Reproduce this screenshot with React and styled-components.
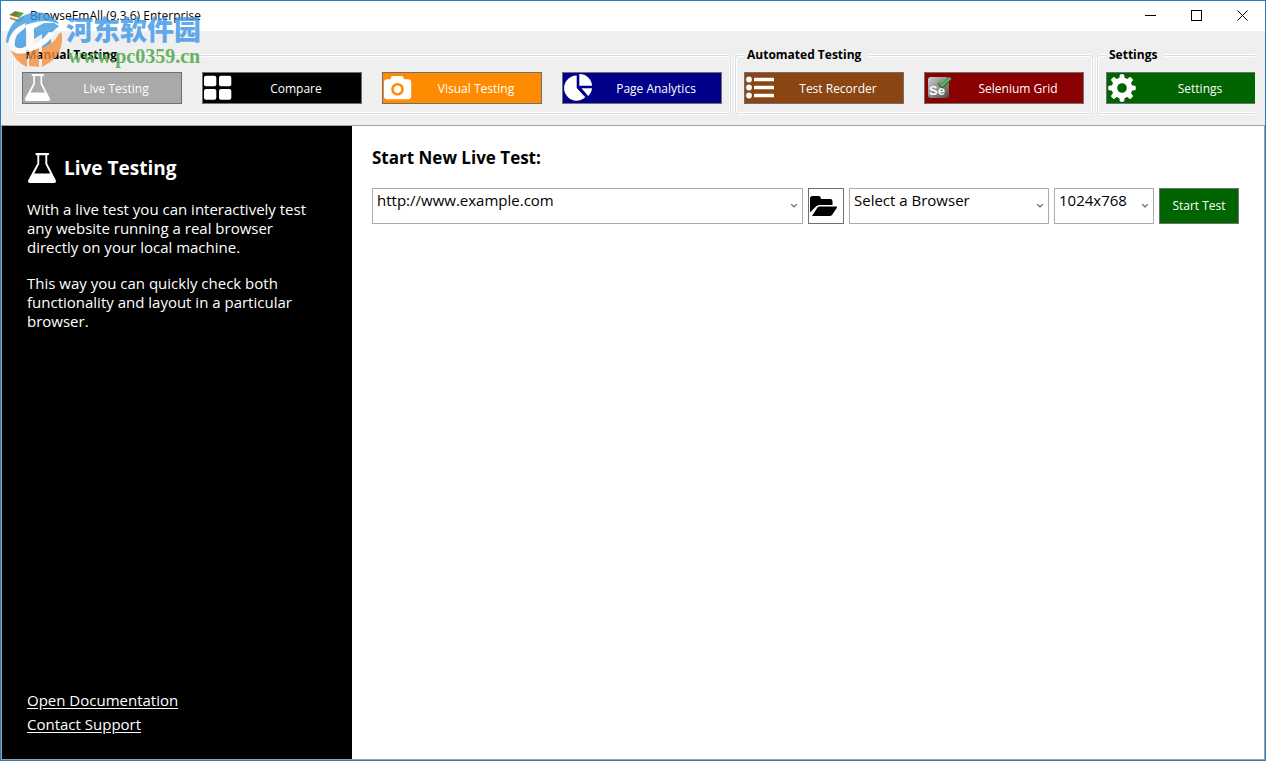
import React from "react"
import styled, { createGlobalStyle } from "styled-components"

const GlobalStyle = createGlobalStyle`
  *, *::before, *::after {
    box-sizing: border-box;
  }

  body {
    margin: 0;
    font-family: "Open Sans", "Noto Sans", sans-serif;
    font-size: 12px;
    color: #000;
  }

  button, input, select {
    font-family: inherit;
    font-size: inherit;
    color: inherit;
  }
`

const Window = styled.div`
  position: relative;
  display: flex;
  flex-direction: column;
  min-height: 100vh;
  border: 1px solid #2a7cc3;
  background: #efefef;
`

const TitleBar = styled.header`
  display: flex;
  align-items: center;
  height: 30px;
  padding-left: 8px;
  background: #fff;
`

const Title = styled.h1`
  flex: 1;
  margin: 0 0 0 5px;
  padding-bottom: 2px;
  font-size: 12px;
  font-weight: 400;
`

const WindowButton = styled.button`
  display: flex;
  align-items: center;
  justify-content: center;
  width: 46px;
  height: 30px;
  padding: 0 0 2px;
  border: 0;
  background: none;

  &:hover {
    background: #e5e5e5;
  }
`

const Ribbon = styled.nav`
  display: flex;
  gap: 2px;
  height: 94px;
  margin: 0 10px 0 11px;
  padding-top: 15px;
  overflow: hidden;
`

const Group = styled.fieldset`
  flex: none;
  display: flex;
  height: 69px;
  min-width: 0;
  margin: 0;
  padding: 8px 7px 6px;
  border: 3px double #fff;
  border-radius: 4px;
  background: linear-gradient(#efefef, #efefef) padding-box, #d5dfe5 border-box;

  legend {
    padding: 0 8px 0 3px;
    background: #efefef;
    font-weight: 700;
    line-height: 18px;
  }
`

const GroupButtons = styled.div`
  display: flex;
  gap: 20px;
`

const RibbonButton = styled.button`
  display: flex;
  align-items: center;
  width: 160px;
  height: 32px;
  padding: 0 2px 0 0;
  border: 1px solid #707070;
  background: ${(p) => p.$color};
  color: #fff;

  svg {
    flex: none;
  }

  span {
    flex: 1;
    text-align: center;
  }
`

const Content = styled.div`
  flex: 1;
  display: flex;
  border: 1px solid #a0a0a0;
  background: #fff;
`

const Sidebar = styled.aside`
  flex: none;
  display: flex;
  flex-direction: column;
  width: 350px;
  padding: 26px 25px 23px;
  background: #000;
  color: #fff;
  font-size: 15px;
  line-height: 19px;

  p {
    margin: 0 0 17px;
  }
`

const SidebarTitle = styled.h2`
  display: flex;
  align-items: center;
  gap: 7px;
  margin: 0 0 16px;
  font-size: 19px;
  line-height: 32px;
`

const SidebarLinks = styled.div`
  display: flex;
  flex-direction: column;
  align-items: flex-start;
  margin-top: auto;

  a {
    color: #fff;
    line-height: 24px;
    text-underline-offset: 2px;
  }
`

const Main = styled.main`
  flex: 1;
  min-width: 0;
  padding: 20px 25px 20px 20px;

  h2 {
    margin: 0 0 18px;
    font-size: 17px;
    line-height: 24px;
  }
`

const TestForm = styled.form`
  display: flex;
  gap: 5px;
`

const Combo = styled.div`
  position: relative;
  flex: ${(p) => (p.$width ? "none" : 1)};
  width: ${(p) => p.$width || "auto"};

  input,
  select {
    display: block;
    width: 100%;
    height: 36px;
    margin: 0;
    padding: 0 20px 12px 4px;
    border: 1px solid #acacac;
    border-radius: 0;
    outline: 0;
    appearance: none;
    background: #fff;
    font-size: 15px;
  }

  svg {
    position: absolute;
    top: 15px;
    right: 5px;
    pointer-events: none;
  }
`

const FolderButton = styled.button`
  display: flex;
  align-items: center;
  width: 36px;
  height: 36px;
  padding: 0;
  border: 1px solid #707070;
  background: #fff;
`

const StartButton = styled.button`
  width: 80px;
  height: 36px;
  padding: 0 0 2px;
  border: 1px solid #707070;
  background: #006400;
  color: #fff;
`

// Site mark, laid over the title bar and the ribbon
const Watermark = styled.div`
  position: absolute;
  top: 8px;
  left: 3px;
  display: flex;
  gap: 1px;
  pointer-events: none;
`

const WatermarkText = styled.div`
  padding-top: 5px;
  font-weight: 700;

  strong {
    display: block;
    color: #3c96e6;
    opacity: 0.8;
    font-family: "Noto Sans CJK SC", sans-serif;
    font-size: 27px;
    line-height: 30px;
  }

  span {
    display: block;
    padding-left: 2px;
    color: #4ca84a;
    opacity: 0.85;
    font-family: "Liberation Serif", serif;
    font-size: 20px;
    line-height: 24px;
  }
`

const FlaskIcon = ({ size = 30, viewBox = "0 0 30 30" }) => (
  <svg width={size} height={size} viewBox={viewBox} fill="#fff">
    <path
      fillRule="evenodd"
      d="M9.500 1h10.500q1 0 1 1t-1 1h-.8v7.500l7.600 14.800q1 2.700-1.600 2.700H3.800q-2.600 0-1.600-2.700L10.300 10.500V3h-.8q-1 0-1-1t1-1zM12 3v8l-4.500 8.500h14.400L17.500 11V3z"
    />
  </svg>
)

const TilesIcon = () => (
  <svg width="30" height="30" fill="#fff">
    <rect x="1" y="2.700" width="12.300" height="10.600" rx="2" />
    <rect x="16" y="2.700" width="12.300" height="10.600" rx="2" />
    <rect x="1" y="16" width="12.300" height="10.800" rx="2" />
    <rect x="16" y="16" width="12.300" height="10.800" rx="2" />
  </svg>
)

const CameraIcon = () => (
  <svg width="30" height="30" fill="#fff">
    <path d="M4 6.300h3.200l1.200-2.500q.4-.8 1.500-.8h8.600q1.100 0 1.500.8l1.200 2.500H25q3.200 0 3.200 3v14q0 3-3.200 3H4q-3 0-3-3v-14q0-3 3-3z" />
    <circle cx="14.500" cy="16.300" r="5" fill="none" stroke="#ff8c00" strokeWidth="2.600" />
  </svg>
)

const PieIcon = () => (
  <svg width="30" height="30" fill="#fff">
    <path d="M13.700 2.500V15l8.600 9.300A12.600 12.600 0 1 1 13.700 2.500z" />
    <path d="M16.300 1A12.500 12 0 0 1 29 12.800H16.300z" />
    <path d="M18.500 15.200H29q-.3 4.600-3.800 7.800z" />
  </svg>
)

const ListIcon = () => (
  <svg width="30" height="30" fill="#fff">
    {[6.5, 14.5, 22.5].map((y) => (
      <React.Fragment key={y}>
        <circle cx="4" cy={y} r="2.900" />
        <rect x="9" y={y - 1.8} width="20" height="3.600" rx="0.600" />
      </React.Fragment>
    ))}
  </svg>
)

const SeleniumIcon = () => (
  <svg width="30" height="30">
    <defs>
      <linearGradient id="se" x1="0" y1="0" x2="1" y2="1">
        <stop offset="0" stopColor="#d0d0d0" />
        <stop offset="0.5" stopColor="#8c8c8c" />
        <stop offset="1" stopColor="#4c4c4c" />
      </linearGradient>
    </defs>
    <rect x="3" y="4" width="21" height="21" rx="3" fill="url(#se)" />
    <text x="4" y="22" fill="#fff" fontSize="13" fontWeight="700" fontFamily="Liberation Sans, sans-serif">
      Se
    </text>
    <path d="M13.500 9.500l4 3.800L25.500 5" fill="none" stroke="#23702c" strokeWidth="3.600" />
    <path d="M13.800 9.200l3.700 3.400L25.300 4.800" fill="none" stroke="#5dbb63" strokeWidth="2" />
  </svg>
)

const GearIcon = () => (
  <svg width="30" height="30" viewBox="-15 -15 30 30" fill="none" stroke="#fff">
    <circle r="7.600" strokeWidth="5.600" />
    {[0, 45, 90, 135, 180, 225, 270, 315].map((angle) => (
      <path
        key={angle}
        d="M-2.200-9.500L-1.700-13.200H1.700L2.200-9.500z"
        fill="#fff"
        strokeWidth="1"
        strokeLinejoin="round"
        transform={`rotate(${angle})`}
      />
    ))}
  </svg>
)

const FolderIcon = () => (
  <svg width="30" height="30">
    <path d="M1 21.500V7.500Q1 5 3.500 5h6q2.300 0 2.300 2.300V8h9.400q2.300 0 2.300 2.300V14H10.500q-2.300 0-3.800 1.800z" />
    <path d="M3 25L8.300 16.800Q9.300 15.500 11 15.500h16q1.600 0 .7 1.400l-4.500 6.800q-.9 1.300-2.600 1.300z" />
  </svg>
)

const Chevron = () => (
  <svg width="8" height="6" fill="none" stroke="#606060" strokeWidth="1.200">
    <path d="M1.200 1.200L4 4l2.800-2.800" />
  </svg>
)

const AppIcon = () => (
  <svg width="16" height="16">
    <path d="M1 9l9 3 5-4v2l-5 4-9-3z" fill="#d9822b" />
    <path d="M0 7l6-4 9 2-5 5z" fill="#5aa544" />
    <path d="M2 7l4-3 4 1-4 3z" fill="#8a6a3c" />
  </svg>
)

const WatermarkLogo = () => (
  <svg width="61" height="60" opacity="0.8">
    <path d="M2 33Q4 13 21 6 34 0 46 7q7 4 9 8-12-5-23-2Q15 16 9 25q-4 5-4 10z" fill="#3c9ae0" />
    <path d="M13 26l9-8v19l-8 5q-6-5-1-16zM29 20l11-6h10l5 3-8 7v12l-9 4V25l-8 5z" fill="#3c9ae0" />
    <path d="M6 39q4 8 17 5v14Q11 53 6 39z" fill="#f58f3c" />
    <path d="M25 42l10-4v20l-10-1zM38 39q13-5 16-13 4-5 4 0 1 21-15 29l-5 3z" fill="#f58f3c" />
    <path d="M4 35Q6 20 22 14l-3 6q-9 5-9 14 0 6 8 5 16-2 27-16l7 1Q38 42 19 44 6 45 4 35z" fill="#fff" />
    <path d="M23 20l7-4v22l-7 2z" fill="#fff" />
  </svg>
)

const groups = [
  {
    title: "Manual Testing",
    items: [
      { text: "Live Testing", color: "#a9a9a9", icon: FlaskIcon },
      { text: "Compare", color: "#000", icon: TilesIcon },
      { text: "Visual Testing", color: "#ff8c00", icon: CameraIcon },
      { text: "Page Analytics", color: "#00008b", icon: PieIcon },
    ],
  },
  {
    title: "Automated Testing",
    items: [
      { text: "Test Recorder", color: "#8b4513", icon: ListIcon },
      { text: "Selenium Grid", color: "#8b0000", icon: SeleniumIcon },
    ],
  },
  {
    title: "Settings",
    items: [{ text: "Settings", color: "#006400", icon: GearIcon }],
  },
]

const App = () => (
  <React.Fragment>
    <GlobalStyle />
    <Window>
      <TitleBar>
        <AppIcon />
        <Title>BrowseEmAll (9.3.6) Enterprise</Title>
        <WindowButton aria-label="Minimize">
          <svg width="11" height="11" stroke="#000" shapeRendering="crispEdges">
            <path d="M0 5.500h11" />
          </svg>
        </WindowButton>
        <WindowButton aria-label="Maximize">
          <svg width="11" height="11" fill="none" stroke="#000" shapeRendering="crispEdges">
            <path d="M.5.5h10v10H.5z" />
          </svg>
        </WindowButton>
        <WindowButton aria-label="Close">
          <svg width="11" height="11" stroke="#000">
            <path d="M.5.5l10 10M10.500.5l-10 10" />
          </svg>
        </WindowButton>
      </TitleBar>

      <Ribbon>
        {groups.map((group) => (
          <Group key={group.title}>
            <legend>{group.title}</legend>
            <GroupButtons>
              {group.items.map(({ text, color, icon: Icon }) => (
                <RibbonButton key={text} $color={color}>
                  <Icon />
                  <span>{text}</span>
                </RibbonButton>
              ))}
            </GroupButtons>
          </Group>
        ))}
      </Ribbon>

      <Content>
        <Sidebar>
          <SidebarTitle>
            <FlaskIcon size={30} viewBox="1.500 1 26 27" />
            Live Testing
          </SidebarTitle>
          <p>
            With a live test you can interactively test any website running a
            real browser directly on your local machine.
          </p>
          <p>
            This way you can quickly check both functionality and layout in a
            particular browser.
          </p>
          <SidebarLinks>
            <a href="#documentation">Open Documentation</a>
            <a href="#support">Contact Support</a>
          </SidebarLinks>
        </Sidebar>

        <Main>
          <h2>Start New Live Test:</h2>
          <TestForm onSubmit={(e) => e.preventDefault()}>
            <Combo>
              <input aria-label="Address" defaultValue="http://www.example.com" />
              <Chevron />
            </Combo>
            <FolderButton type="button" aria-label="Open file">
              <FolderIcon />
            </FolderButton>
            <Combo $width="200px">
              <select aria-label="Browser">
                <option>Select a Browser</option>
              </select>
              <Chevron />
            </Combo>
            <Combo $width="100px">
              <select aria-label="Resolution">
                <option>1024x768</option>
              </select>
              <Chevron />
            </Combo>
            <StartButton>Start Test</StartButton>
          </TestForm>
        </Main>
      </Content>

      <Watermark>
        <WatermarkLogo />
        <WatermarkText>
          <strong lang="zh">河东软件园</strong>
          <span>www.pc0359.cn</span>
        </WatermarkText>
      </Watermark>
    </Window>
  </React.Fragment>
)

export default App
